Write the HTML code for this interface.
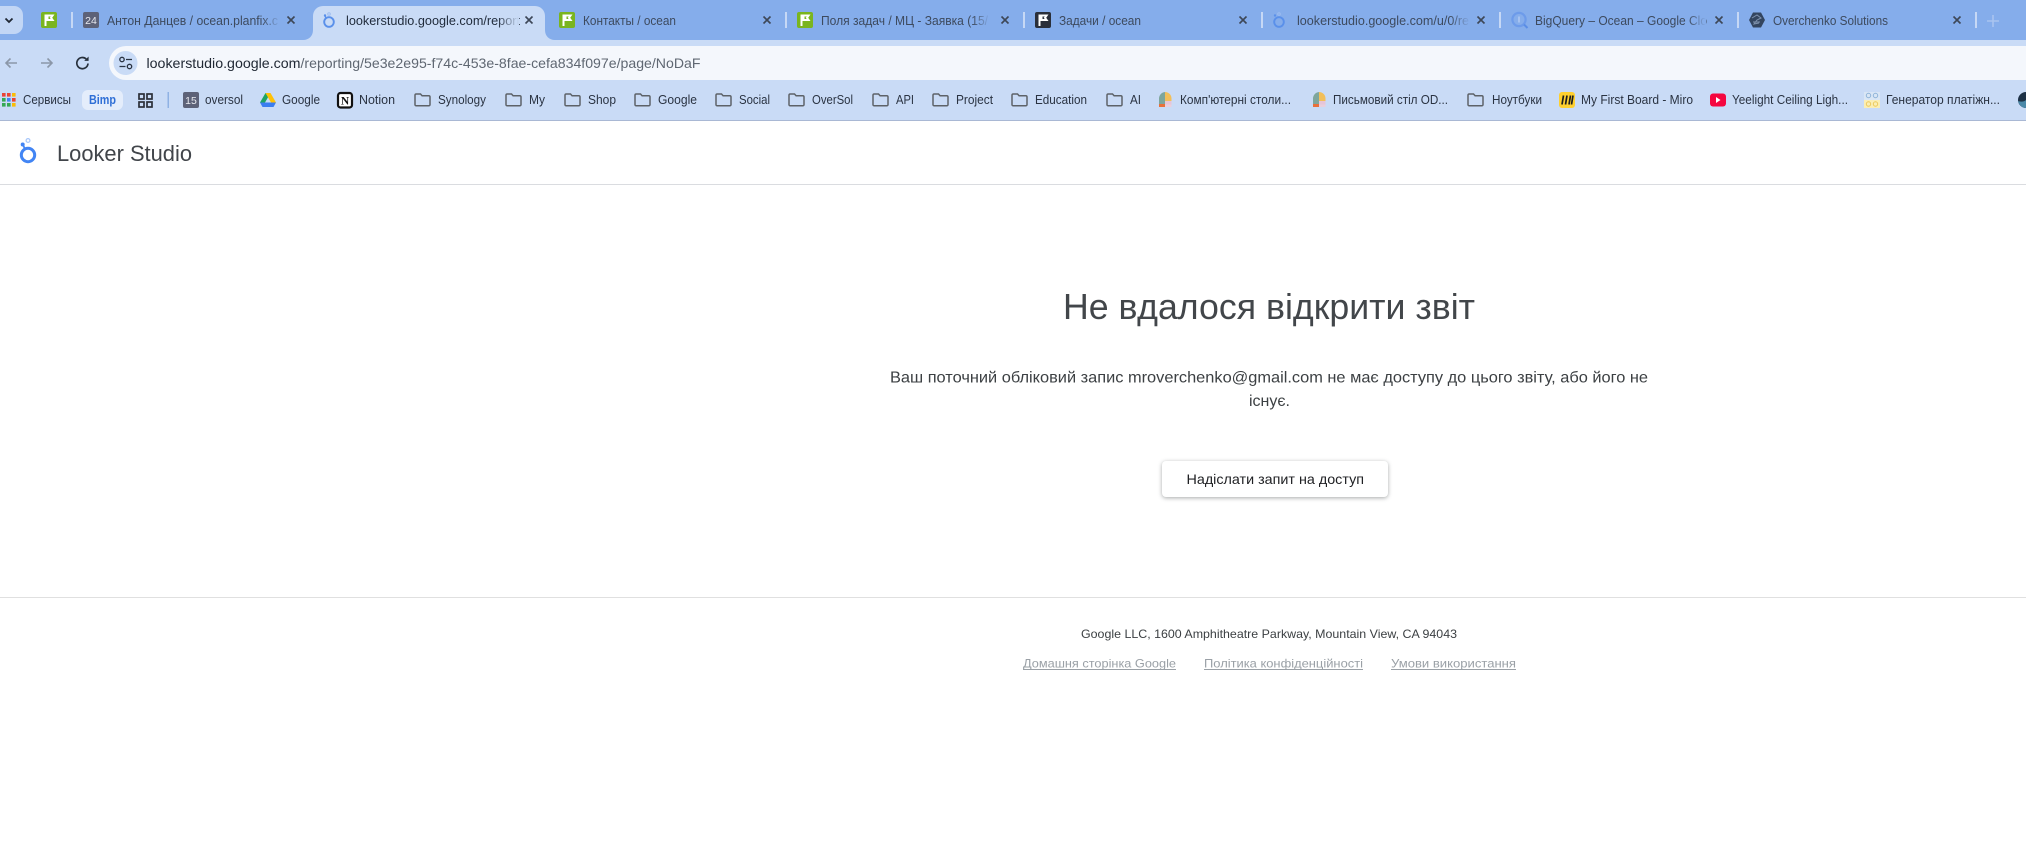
<!DOCTYPE html>
<html lang="uk"><head><meta charset="utf-8"><title>Looker Studio</title>
<style>
html,body{margin:0;padding:0;background:#fff;width:2026px;height:858px;overflow:hidden}
svg{display:block;font-family:"Liberation Sans","Noto Sans CJK SC",sans-serif}
.t{font-size:12.5px;fill:#3d4a5e}
.a{font-size:12.5px;fill:#1f2a3a}
.b{font-size:12.5px;fill:#2a3342}
.x{stroke:#3d4757;stroke-width:1.6;fill:none}
.s{fill:#c6d8f5}
.f{fill:none;stroke:#5d6268;stroke-width:1.5}
.m{fill:#3c4043}
.l{font-size:12px;fill:#9aa0a6}
</style></head><body>
<svg width="2026" height="858" viewBox="0 0 2026 858" xmlns="http://www.w3.org/2000/svg">
<defs>
<linearGradient id="g1"><stop offset="0" stop-color="#85adeb" stop-opacity="0"/><stop offset="1" stop-color="#85adeb"/></linearGradient>
<linearGradient id="g2"><stop offset="0" stop-color="#c9dbf6" stop-opacity="0"/><stop offset="1" stop-color="#c9dbf6"/></linearGradient>
<symbol id="flag" viewBox="0 0 16 16" overflow="visible"><rect width="16" height="16" rx="2" fill="#7ab51f"/><path d="M3.5 2.5h10l-2.3 3.2 2.3 3.3H5.5v5h-2z" fill="#fff"/><path d="M7.5 4.5h2.2l-1 1.3 1 1.2H7.5z" fill="#7ab51f"/></symbol>
<symbol id="flagd" viewBox="0 0 16 16" overflow="visible"><rect width="16" height="16" rx="2" fill="#2a2f3a"/><path d="M3.5 2.5h10l-2.3 3.2 2.3 3.3H5.5v5h-2z" fill="#fff"/><path d="M7.5 4.5h2.2l-1 1.3 1 1.2H7.5z" fill="#2a2f3a"/></symbol>
<symbol id="fo" viewBox="0 0 17 14" overflow="visible"><path class="f" d="M1 2.2a1.2 1.2 0 011.2-1.2h4.3l1.6 1.8h6.7a1.2 1.2 0 011.2 1.2v7.6a1.2 1.2 0 01-1.2 1.2H2.2A1.2 1.2 0 011 11.6z"/></symbol>
<symbol id="arch" viewBox="0 0 13 16" overflow="visible"><path d="M0 12V6.5A6.5 6.5 0 016 0v12z" fill="#7ea69c"/><path d="M6 0a6.5 6.5 0 016.5 6.5V9H6z" fill="#f2bf5a"/><path d="M6 9h6.5v3.5H6z" fill="#e6c5d8"/><path d="M0 12h6v3H0z" fill="#e8703a"/><path d="M6 12.5h6.5V15H6z" fill="#e8cfdd"/></symbol>
<symbol id="xx" viewBox="0 0 10 10" overflow="visible"><path class="x" d="M1.500 1.500l7 7M8.500 1.500l-7 7"/></symbol>
</defs>

<!-- Tab strip -->
<rect x="0" y="0" width="2026" height="40" fill="#85adeb"/>
<rect x="-12" y="6" width="35" height="28" rx="9" fill="#c2d6f5"/>
<path d="M5.5 18.5l3.5 3.5 3.5-3.5" fill="none" stroke="#1f2733" stroke-width="1.8"/>
<use href="#flag" x="41" y="12" width="16" height="16"/>
<rect class="s" x="71" y="12" width="2" height="16"/>
<rect x="83" y="12" width="16" height="16" rx="2" fill="#5d6278"/>
<text x="91" y="24" text-anchor="middle" font-size="10.5" fill="#e8e9ef">24</text>
<text class="t" x="107" y="25" textLength="171" lengthAdjust="spacingAndGlyphs">Антон Данцев / ocean.planfix.c</text>
<rect x="262" y="10" width="18" height="22" fill="url(#g1)"/>
<use href="#xx" x="286" y="15" width="10" height="10"/>

<path d="M303 40c6 0 10-4 10-10V16a10 10 0 0110-10h212a10 10 0 0110 10v14c0 6 4 10 10 10z" fill="#c9dbf6"/>
<circle cx="329" cy="22" r="4.800" fill="none" stroke="#5a90ea" stroke-width="1.900"/>
<path d="M326 18l-1-2" stroke="#5a90ea" stroke-width="1.400"/>
<circle cx="325" cy="15.5" r="1.200" fill="#5a90ea"/>
<circle cx="329" cy="14" r="1.300" fill="none" stroke="#9dbdf0" stroke-width="1"/>
<text class="a" x="346" y="25" textLength="174" lengthAdjust="spacingAndGlyphs">lookerstudio.google.com/report</text>
<rect x="497" y="10" width="22" height="22" fill="url(#g2)"/>
<use href="#xx" x="524" y="15" width="10" height="10"/>

<use href="#flag" x="559" y="12" width="16" height="16"/>
<text class="t" x="583" y="25" textLength="93" lengthAdjust="spacingAndGlyphs">Контакты / ocean</text>
<use href="#xx" x="762" y="15" width="10" height="10"/>
<rect class="s" x="785" y="12" width="2" height="16"/>
<use href="#flag" x="797" y="12" width="16" height="16"/>
<text class="t" x="821" y="25" textLength="167" lengthAdjust="spacingAndGlyphs">Поля задач / МЦ - Заявка (15/</text>
<rect x="972" y="10" width="18" height="22" fill="url(#g1)"/>
<use href="#xx" x="1000" y="15" width="10" height="10"/>
<rect class="s" x="1023" y="12" width="2" height="16"/>
<use href="#flagd" x="1035" y="12" width="16" height="16"/>
<text class="t" x="1059" y="25" textLength="82" lengthAdjust="spacingAndGlyphs">Задачи / ocean</text>
<use href="#xx" x="1238" y="15" width="10" height="10"/>
<rect class="s" x="1261" y="12" width="2" height="16"/>
<circle cx="1279" cy="22" r="4.800" fill="none" stroke="#5a90ea" stroke-width="1.900"/>
<circle cx="1275" cy="15.5" r="1.200" fill="#5a90ea"/>
<circle cx="1279" cy="14" r="1.300" fill="none" stroke="#9dbdf0" stroke-width="1"/>
<text class="t" x="1297" y="25" textLength="172" lengthAdjust="spacingAndGlyphs">lookerstudio.google.com/u/0/re</text>
<rect x="1450" y="10" width="20" height="22" fill="url(#g1)"/>
<use href="#xx" x="1476" y="15" width="10" height="10"/>
<rect class="s" x="1499" y="12" width="2" height="16"/>
<circle cx="1519" cy="19.500" r="6.600" fill="none" stroke="#6d9bea" stroke-width="2.200"/>
<path d="M1524 24.500l3.500 3.500" stroke="#5a8de6" stroke-width="2"/>
<path d="M1519 16.500v6" stroke="#a9c5f2" stroke-width="1.800"/>
<text class="t" x="1535" y="25" textLength="172" lengthAdjust="spacingAndGlyphs">BigQuery – Ocean – Google Clo</text>
<rect x="1688" y="10" width="18" height="22" fill="url(#g1)"/>
<use href="#xx" x="1714" y="15" width="10" height="10"/>
<rect class="s" x="1737" y="12" width="2" height="16"/>
<path d="M1753 12.500h8l4 7.500-4 7.500h-8l-4-7.500z" fill="#33455f"/>
<path d="M1752 18l5-3 4 3-4 2-3 4 5-1M1753 22h7" fill="none" stroke="#7f92ad" stroke-width="1"/>
<text class="t" x="1773" y="25" textLength="115" lengthAdjust="spacingAndGlyphs">Overchenko Solutions</text>
<use href="#xx" x="1952" y="15" width="10" height="10"/>
<rect class="s" x="1975" y="12" width="2" height="16"/>
<path d="M1993 15v12M1987 21h12" stroke="#a9c4f0" stroke-width="1.600"/>

<!-- Toolbar -->
<rect x="0" y="40" width="2026" height="80" fill="#c9dbf6"/>
<path d="M17 63H6m4.500-4.500L6 63l4.500 4.500" fill="none" stroke="#8b97a8" stroke-width="1.600"/>
<path d="M41 63h11m-4.500-4.500L52 63l-4.500 4.500" fill="none" stroke="#8b97a8" stroke-width="1.600"/>
<path d="M88 63.500a5.600 5.600 0 11-1.800-4.500" fill="none" stroke="#27303c" stroke-width="1.700"/>
<path d="M88.600 56.500v4.400h-4.400z" fill="#27303c"/>
<path d="M126 46H2026V80H126a17 17 0 010-34z" fill="#f4f7fc"/>
<circle cx="125.500" cy="63" r="12" fill="#c9dbf6"/>
<circle cx="122" cy="59.500" r="2.200" fill="none" stroke="#2a3342" stroke-width="1.300"/>
<path d="M126 59.500h6M119.500 66.500h6" stroke="#2a3342" stroke-width="1.300"/>
<circle cx="129.500" cy="66.500" r="2.200" fill="none" stroke="#2a3342" stroke-width="1.300"/>
<text x="146.500" y="68" font-size="14" fill="#1f2733" textLength="154" lengthAdjust="spacingAndGlyphs">lookerstudio.google.com</text>
<text x="300.500" y="68" font-size="14" fill="#5f6772" textLength="400" lengthAdjust="spacingAndGlyphs">/reporting/5e3e2e95-f74c-453e-8fae-cefa834f097e/page/NoDaF</text>

<!-- Bookmarks -->
<g>
<rect x="2" y="93" width="3.600" height="3.600" fill="#ea4335"/><rect x="7" y="93" width="3.600" height="3.600" fill="#ea4335"/><rect x="12" y="93" width="3.600" height="3.600" fill="#fbbc05"/>
<rect x="2" y="98" width="3.600" height="3.600" fill="#34a853"/><rect x="7" y="98" width="3.600" height="3.600" fill="#4285f4"/><rect x="12" y="98" width="3.600" height="3.600" fill="#ea4335"/>
<rect x="2" y="103" width="3.600" height="3.600" fill="#34a853"/><rect x="7" y="103" width="3.600" height="3.600" fill="#34a853"/><rect x="12" y="103" width="3.600" height="3.600" fill="#fbbc05"/>
</g>
<text class="b" x="23" y="104" textLength="48" lengthAdjust="spacingAndGlyphs">Сервисы</text>
<rect x="82" y="90" width="41" height="20" rx="6" fill="#e4edfb"/>
<text x="89" y="104" font-size="12.500" font-weight="bold" fill="#2f6fd6" textLength="27" lengthAdjust="spacingAndGlyphs">Bimp</text>
<g fill="none" stroke="#2a2f38" stroke-width="1.700">
<rect x="139" y="94" width="5" height="5"/><rect x="147" y="94" width="5" height="5"/><rect x="139" y="102" width="5" height="5"/><rect x="147" y="102" width="5" height="5"/>
</g>
<rect x="167.500" y="92" width="1.500" height="16" fill="#8fb2e4"/>
<rect x="183" y="92" width="16" height="16" rx="2" fill="#5d6278"/>
<text x="191" y="104" text-anchor="middle" font-size="10.500" fill="#e8e9ef">15</text>
<text class="b" x="205" y="104" textLength="38" lengthAdjust="spacingAndGlyphs">oversol</text>

<path d="M265.500 93h5l-5.500 9.500h-5z" fill="#1fa463"/>
<path d="M270.500 93l5.500 9.500h-5l-5.500-9.500z" fill="#ffc107"/>
<path d="M260 102.500h16l-2.500 4.500h-11z" fill="#3b7df0"/>
<text class="b" x="282" y="104" textLength="38" lengthAdjust="spacingAndGlyphs">Google</text>

<rect x="338" y="93" width="14" height="14.500" rx="2.500" fill="#fff" stroke="#111" stroke-width="2.200"/>
<text x="345" y="104.500" text-anchor="middle" font-size="11.500" font-weight="bold" font-family="Liberation Serif" fill="#111">N</text>
<text class="b" x="359" y="104" textLength="36" lengthAdjust="spacingAndGlyphs">Notion</text>

<use href="#fo" x="414" y="93" width="17" height="14"/><text class="b" x="438" y="104" textLength="48" lengthAdjust="spacingAndGlyphs">Synology</text>
<use href="#fo" x="505" y="93" width="17" height="14"/><text class="b" x="529" y="104" textLength="16" lengthAdjust="spacingAndGlyphs">My</text>
<use href="#fo" x="564" y="93" width="17" height="14"/><text class="b" x="588" y="104" textLength="28" lengthAdjust="spacingAndGlyphs">Shop</text>
<use href="#fo" x="634" y="93" width="17" height="14"/><text class="b" x="658" y="104" textLength="39" lengthAdjust="spacingAndGlyphs">Google</text>
<use href="#fo" x="715" y="93" width="17" height="14"/><text class="b" x="739" y="104" textLength="31" lengthAdjust="spacingAndGlyphs">Social</text>
<use href="#fo" x="788" y="93" width="17" height="14"/><text class="b" x="812" y="104" textLength="41" lengthAdjust="spacingAndGlyphs">OverSol</text>
<use href="#fo" x="872" y="93" width="17" height="14"/><text class="b" x="896" y="104" textLength="18" lengthAdjust="spacingAndGlyphs">API</text>
<use href="#fo" x="932" y="93" width="17" height="14"/><text class="b" x="956" y="104" textLength="37" lengthAdjust="spacingAndGlyphs">Project</text>
<use href="#fo" x="1011" y="93" width="17" height="14"/><text class="b" x="1035" y="104" textLength="52" lengthAdjust="spacingAndGlyphs">Education</text>
<use href="#fo" x="1106" y="93" width="17" height="14"/><text class="b" x="1130" y="104" textLength="11" lengthAdjust="spacingAndGlyphs">AI</text>
<use href="#arch" x="1159" y="92" width="13" height="16"/><text class="b" x="1180" y="104" textLength="111" lengthAdjust="spacingAndGlyphs">Комп'ютерні столи...</text>
<use href="#arch" x="1313" y="92" width="13" height="16"/><text class="b" x="1333" y="104" textLength="115" lengthAdjust="spacingAndGlyphs">Письмовий стіл OD...</text>
<use href="#fo" x="1467" y="93" width="17" height="14"/><text class="b" x="1492" y="104" textLength="50" lengthAdjust="spacingAndGlyphs">Ноутбуки</text>
<rect x="1559" y="92" width="16" height="16" rx="3" fill="#ffd02f"/>
<path d="M1563.500 95.500l-1.500 9M1567 95.500l-1.500 9M1570.500 95.500l-1.500 9M1573 95.500l-1.500 9" stroke="#1d1d1d" stroke-width="1.700"/>
<text class="b" x="1581" y="104" textLength="112" lengthAdjust="spacingAndGlyphs">My First Board - Miro</text>
<rect x="1710" y="93.500" width="16" height="13" rx="3" fill="#f5063f"/>
<path d="M1716 97l4.500 3-4.500 3z" fill="#fff"/>
<text class="b" x="1732" y="104" textLength="116" lengthAdjust="spacingAndGlyphs">Yeelight Ceiling Ligh...</text>
<rect x="1864" y="92" width="16" height="8" fill="#d9e6f5"/><rect x="1864" y="100" width="16" height="8" fill="#fbeeb4"/>
<g fill="none" stroke="#8fb4d9" stroke-width="1"><circle cx="1868.500" cy="95.500" r="2.200"/><circle cx="1875.500" cy="95.500" r="2.200"/></g>
<g fill="none" stroke="#ecc95a" stroke-width="1"><circle cx="1868.500" cy="104" r="2.200"/><circle cx="1875.500" cy="104" r="2.200"/></g>
<text class="b" x="1886" y="104" textLength="114" lengthAdjust="spacingAndGlyphs">Генератор платіжн...</text>
<circle cx="2026" cy="100" r="8" fill="#1d3146"/>
<path d="M2018 101c3 1 6 1 8-1v8c-4 0-7-3-8-7z" fill="#4a88a8"/>
<rect x="0" y="120" width="2026" height="1" fill="#a9b8d4"/>

<!-- Looker header -->
<rect x="0" y="121" width="2026" height="737" fill="#fff"/>
<circle cx="28" cy="155" r="6.700" fill="none" stroke="#4285f4" stroke-width="3"/>
<path d="M25 149l-2-4" stroke="#4285f4" stroke-width="1.800"/>
<circle cx="22.700" cy="144.500" r="2" fill="#4285f4"/>
<circle cx="28" cy="140.500" r="1.900" fill="none" stroke="#a8c7fa" stroke-width="1.300"/>
<text x="57" y="161" font-size="22" fill="#41454a" textLength="135" lengthAdjust="spacingAndGlyphs">Looker Studio</text>
<rect x="0" y="184" width="2026" height="1" fill="#dadce0"/>

<!-- Main -->
<text x="1063" y="319" font-size="36" fill="#42464a" textLength="412" lengthAdjust="spacingAndGlyphs">Не вдалося відкрити звіт</text>
<text class="m" x="890" y="382.500" font-size="16" textLength="758" lengthAdjust="spacingAndGlyphs">Ваш поточний обліковий запис mroverchenko@gmail.com не має доступу до цього звіту, або його не</text>
<text class="m" x="1249" y="406" font-size="16" textLength="41" lengthAdjust="spacingAndGlyphs">існує.</text>
<rect x="1162" y="461" width="226" height="36" rx="4" fill="#fff" style="filter:drop-shadow(0 1px 2px rgba(60,64,67,.45))"/>
<text x="1186.500" y="484" font-size="14" fill="#202124" textLength="177.500" lengthAdjust="spacingAndGlyphs">Надіслати запит на доступ</text>

<!-- Footer -->
<rect x="0" y="597" width="2026" height="1" fill="#e0e0e0"/>
<text x="1081" y="638" font-size="12" fill="#3c4043" textLength="376" lengthAdjust="spacingAndGlyphs">Google LLC, 1600 Amphitheatre Parkway, Mountain View, CA 94043</text>
<text class="l" x="1023" y="667.500" textLength="153" lengthAdjust="spacingAndGlyphs">Домашня сторінка Google</text>
<rect x="1023" y="669" width="153" height="1" fill="#9aa0a6"/>
<text class="l" x="1204" y="667.500" textLength="159" lengthAdjust="spacingAndGlyphs">Політика конфіденційності</text>
<rect x="1204" y="669" width="159" height="1" fill="#9aa0a6"/>
<text class="l" x="1391" y="667.500" textLength="125" lengthAdjust="spacingAndGlyphs">Умови використання</text>
<rect x="1391" y="669" width="125" height="1" fill="#9aa0a6"/>
</svg>
</body></html>
